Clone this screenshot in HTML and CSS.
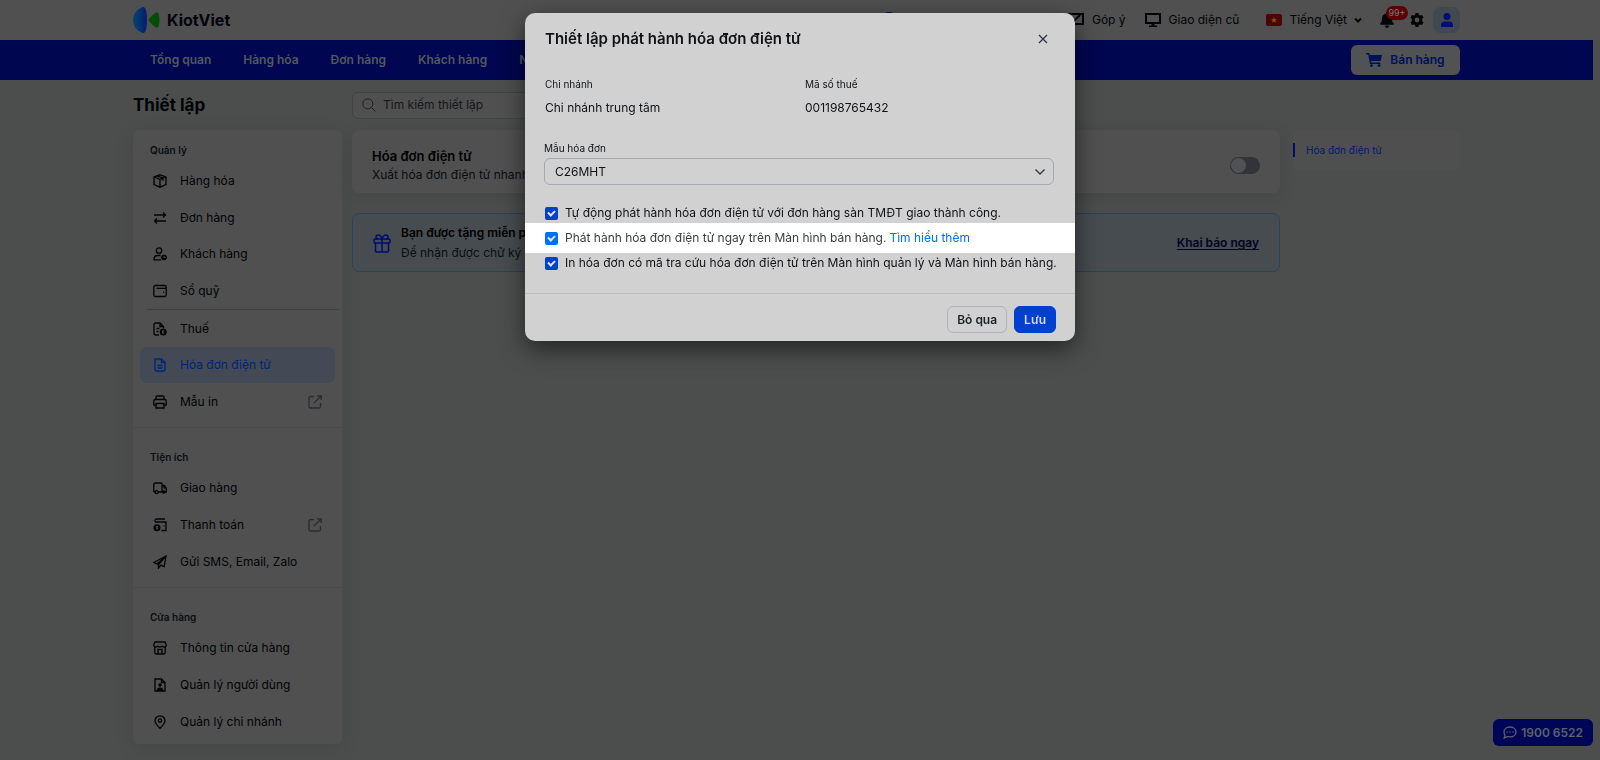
FILE: index.html
```html
<!DOCTYPE html>
<html lang="vi">
<head>
<meta charset="utf-8">
<meta name="viewport" content="width=device-width, initial-scale=1">
<title>KiotViet - Thiết lập</title>
<link rel="stylesheet" href="styles.css">
</head>
<body>
<header class="topbar">
  <a class="brand" href="#">
    <svg class="brand-mark" viewBox="0 0 27 26" aria-hidden="true">
      <defs><linearGradient id="wing" x1="0" y1="0" x2="1" y2="0"><stop offset="0" stop-color="#08466a"/><stop offset="1" stop-color="#001d72"/></linearGradient></defs>
      <path d="M10.500 0C13 .5 14 6 14 13s-1 12.500-3.500 13C4 24.500 0 19.500 0 13S4 1.500 10.500 0z" fill="url(#wing)"/>
      <path d="M15.500 13c1.500-2 5-6.500 8.500-8 2 1.500 2.500 4.500 2.500 8s-.5 6.500-2.500 8c-3.500-1.500-7-6-8.500-8z" fill="#004d05"/>
    </svg>
    <span>KiotViet</span>
  </a>
  <nav class="tools" aria-label="Tiện ích tài khoản">
    <a class="tool tool-round" href="#" aria-label="Hỗ trợ"><svg class="i16" viewBox="0 0 16 16" aria-hidden="true"><circle cx="8" cy="8" r="8" fill="#000a60"/></svg></a>
    <a class="tool" href="#"><svg class="i16" viewBox="0 0 16 16" aria-hidden="true"><path d="M1 2h14v10H7l-3 3v-3H1z" class="line"/><path d="m6 9 6-6" class="line"/></svg>Góp ý</a>
    <a class="tool tool-screen" href="#"><svg class="i16" viewBox="0 0 16 16" aria-hidden="true"><path d="M1 2h14v9H1z" class="line"/><path d="M6.500 11h3v2.500H12V15H4v-1.500h2.500z" fill="currentColor"/></svg>Giao diện cũ</a>
    <a class="tool tool-lang" href="#"><svg class="flag" viewBox="0 0 16 12" aria-hidden="true"><rect width="16" height="12" rx="2" fill="#4d0206"/><path d="m8 3 .8 2.200h2.300L9.300 6.600l.7 2.200L8 7.500 6 8.800l.7-2.200-1.800-1.400h2.300z" fill="#6d6500"/></svg>Tiếng Việt<svg class="caret" viewBox="0 0 8 8" aria-hidden="true"><path d="m1 2.500 3 3 3-3" class="line"/></svg></a>
    <button class="icon-btn bell" type="button" aria-label="Thông báo"><svg viewBox="0 0 14 16" aria-hidden="true"><path d="M7 0c.6 0 1 .5 1 1v.6c2.500.5 4 2.400 4 5 0 2.500.7 3.700 1.700 4.700.5.600.2 1.500-.7 1.500H1c-.9 0-1.200-.9-.7-1.500C1.300 10.300 2 9.100 2 6.600c0-2.600 1.500-4.500 4-5V1c0-.5.4-1 1-1zM5 13.600h4C9 15 8.100 16 7 16s-2-1-2-2.400z" fill="currentColor"/></svg><span class="badge">99+</span></button>
    <button class="icon-btn gear" type="button" aria-label="Thiết lập"><svg viewBox="0 0 14 14" aria-hidden="true"><path fill="currentColor" fill-rule="evenodd" d="M5.500 0h3l.4 1.900 1.200.7 1.900-.6L13.500 4.600 12.100 5.900v2.200l1.400 1.300L12 12l-1.900-.6-1.200.7L8.500 14h-3l-.4-1.900-1.200-.7L2 12 .5 9.400l1.400-1.300V5.900L.5 4.600 2 2l1.900.6 1.200-.7zM7 4.600a2.400 2.400 0 1 0 0 4.800 2.400 2.400 0 0 0 0-4.800z"/></svg></button>
    <button class="user" type="button" aria-label="Tài khoản"><svg viewBox="0 0 12 14" aria-hidden="true"><circle cx="6" cy="3.500" r="3.500" fill="currentColor"/><path d="M0 14v-2c0-2.200 1.600-3.600 3.700-3.600h4.600C10.400 8.400 12 9.800 12 12v2z" fill="currentColor"/></svg></button>
  </nav>
</header>
<nav class="mainnav" aria-label="Chính">
  <div class="mainnav-links">
    <a href="#">Tổng quan</a><a href="#">Hàng hóa</a><a href="#">Đơn hàng</a><a href="#">Khách hàng</a><a href="#">Nhân viên</a>
  </div>
  <button class="sell" type="button"><svg viewBox="0 0 16 14" aria-hidden="true"><path d="M0 0h2.600c.5 0 .8.300.9.700L3.700 2H16l-1.300 6H5l.3 1.500h9V11H4L2.200 1.500H0z" fill="currentColor"/><circle cx="5.500" cy="12.600" r="1.400" fill="currentColor"/><circle cx="13" cy="12.600" r="1.400" fill="currentColor"/></svg>Bán hàng</button>
</nav>

<main class="page">
  <div class="page-head">
    <h1>Thiết lập</h1>
    <label class="search"><svg viewBox="0 0 14 14" aria-hidden="true"><circle cx="5.800" cy="5.800" r="5" class="thin"/><path d="m9.500 9.500 4 4" class="thin"/></svg><input type="text" placeholder="Tìm kiếm thiết lập" aria-label="Tìm kiếm thiết lập"></label>
  </div>
  <div class="columns">
    <aside class="sidebar">
      <section>
        <h2>Quản lý</h2>
        <ul>
          <li><a href="#"><svg viewBox="0 0 14 14"><path d="M7 .8 13 3v7.500l-6 2.700-6-2.700V3zM1 3l6 2.400L13 3M7 5.400v7.800M4 1.900l6 2.300v2.600"/></svg>Hàng hóa</a></li>
          <li><a href="#"><svg viewBox="0 0 14 14"><path d="M1 4h11.500M10 1.500 12.500 4 10 6.500M13 10H1.500M4 7.500 1.500 10 4 12.500"/></svg>Đơn hàng</a></li>
          <li><a href="#"><svg viewBox="0 0 14 14"><circle cx="6" cy="3.500" r="2.700"/><path d="M7.500 8.500H4.500C2.300 8.500 1 10 1 12.800h7"/><circle cx="11" cy="10.500" r="2.800" class="solid"/><path d="M11 9v1.500h1.500" class="cut"/></svg>Khách hàng</a></li>
          <li><a href="#"><svg viewBox="0 0 14 14"><rect x=".8" y="1.500" width="12.400" height="11" rx="1.500"/><path d="M3.500 4.300h9.700M10 8.200h1"/></svg>Sổ quỹ</a></li>
          <li class="ruled"><a href="#"><svg viewBox="0 0 14 14"><path d="M6 13H2.500C1.500 13 1 12.500 1 11.500v-9C1 1.500 1.500 1 2.500 1H7l3.500 3.500V6M7 1v3.500h3.500M3.500 6.500h3M3.500 9.500h2"/><circle cx="10.200" cy="10" r="3.500" class="solid"/><path d="M11.300 8.800H9.500v2.400h1.800M9.500 10h1.500" class="cut"/></svg>Thuế</a></li>
          <li><a class="active" href="#" aria-current="page"><svg viewBox="0 0 14 14"><path d="M2.500 1h6L12 4.500v7.500c0 .6-.4 1-1 1H3c-.6 0-1-.4-1-1V1zM8.500 1v3.500H12M4.500 7.500h5M4.500 10h5"/></svg>Hóa đơn điện tử</a></li>
          <li><a href="#"><svg viewBox="0 0 14 14"><path d="M3 4.500V2c0-.7.400-1 1-1h6c.6 0 1 .3 1 1v2.500M3 10.500H1.800c-.6 0-1-.4-1-1V6c0-.9.600-1.500 1.500-1.500h9.400c.9 0 1.500.6 1.500 1.500v3.500c0 .6-.4 1-1 1H11M3 8.500h8V13H3z"/></svg>Mẫu in<svg class="ext" viewBox="0 0 14 14"><path d="M6 1.500H2.500c-.9 0-1.500.6-1.500 1.500v8.500c0 .9.600 1.500 1.500 1.500H11c.9 0 1.500-.6 1.500-1.500V8M9 .8h4.200V5M13 1 6 8"/></svg></a></li>
        </ul>
      </section>
      <section>
        <h2>Tiện ích</h2>
        <ul>
          <li><a href="#"><svg viewBox="0 0 14 14"><path d="M2 11.200c-.7 0-1.200-.5-1.200-1.200V3.500C.8 2.600 1.300 2 2.200 2H8c.7 0 1 .4 1 1v8H5.500M9 4.500h2.300l2 3V11H12"/><circle cx="3.700" cy="11.200" r="1.500"/><circle cx="10.700" cy="11" r="1.800" class="solid"/><path d="M10.500 5h1l1.800 2.500h-2.800z" class="solid"/></svg>Giao hàng</a></li>
          <li><a href="#"><svg viewBox="0 0 14 14"><path d="M2 4V2.500C2 1.500 2.500 1 3.500 1H12M2 4h11v8.500H8.500M10.500 8h1"/><circle cx="4" cy="9.800" r="3.500" class="solid"/><path d="M5 8.500H3.300v1.300h1.500V11H3" class="cut"/></svg>Thanh toán<svg class="ext" viewBox="0 0 14 14"><path d="M6 1.500H2.500c-.9 0-1.500.6-1.500 1.500v8.500c0 .9.600 1.500 1.500 1.500H11c.9 0 1.500-.6 1.500-1.500V8M9 .8h4.200V5M13 1 6 8"/></svg></a></li>
          <li><a href="#"><svg viewBox="0 0 14 14"><path d="M13 1 .8 7.500l3.400 1.600L13 1l-1.800 10.500-4-1.700M13 1 5.500 9.500V13l2-2.500"/></svg>Gửi SMS, Email, Zalo</a></li>
        </ul>
      </section>
      <section>
        <h2>Cửa hàng</h2>
        <ul>
          <li><a href="#"><svg viewBox="0 0 14 14"><path d="M2 1h10l1.300 3c0 1-.8 2-2.100 2S9.100 5.200 9.100 4.500C9.100 5.200 8.300 6 7 6s-2.100-.8-2.100-1.500C4.900 5.200 4.100 6 2.800 6S.7 5 .7 4zM1.800 6v5.500c0 1 .5 1.500 1.500 1.500h7.400c1 0 1.500-.5 1.500-1.500V6M5 13V8.500h4V13"/></svg>Thông tin cửa hàng</a></li>
          <li><a href="#"><svg viewBox="0 0 14 14"><path d="M2 1h6.500L12 4.500V13H2zM8.500 1v3.500H12"/><circle cx="7" cy="7" r="1.800" class="solid"/><path d="M3.500 13c0-2.500 1.500-3.500 3.500-3.500s3.500 1 3.500 3.500z" class="solid"/></svg>Quản lý người dùng</a></li>
          <li><a href="#"><svg viewBox="0 0 14 14"><path d="M7 13.300C4.500 11 2 8.500 2 5.800a5 5 0 0 1 10 0c0 2.700-2.500 5.200-5 7.500z"/><circle cx="7" cy="5.600" r="1.700"/></svg>Quản lý chi nhánh</a></li>
        </ul>
      </section>
    </aside>
    <div class="content">
      <section class="card">
        <div><h3>Hóa đơn điện tử</h3><p>Xuất hóa đơn điện tử nhanh chóng</p></div>
        <input class="toggle" type="checkbox" aria-label="Hóa đơn điện tử">
      </section>
      <section class="card promo">
        <svg viewBox="0 0 18 19" aria-hidden="true"><rect x="1" y="5" width="16" height="4" rx="1"/><path d="M2.500 9v8c0 .6.400 1 1 1h11c.6 0 1-.4 1-1V9M9 5v13M9 5C8 2 6.500 1 5.200 1 3.500 1 3 2.300 3 3c0 1.200 1 2 2 2M9 5c1-3 2.500-4 3.800-4C14.500 1 15 2.300 15 3c0 1.200-1 2-2 2"/></svg>
        <div><h3>Bạn được tặng miễn phí</h3><p>Để nhận được chữ ký số</p></div>
        <a href="#">Khai báo ngay</a>
      </section>
    </div>
    <nav class="toc" aria-label="Mục lục"><a href="#">Hóa đơn điện tử</a></nav>
  </div>
</main>

<a class="hotline" href="tel:19006522"><svg viewBox="0 0 14 13" aria-hidden="true"><path d="M7 1c3.500 0 6 2.100 6 4.900S10.500 10.800 7 10.800c-.8 0-1.600-.1-2.300-.3L1.200 12l.8-2.800C1.300 8.300 1 7.200 1 5.900 1 3.100 3.500 1 7 1z"/><path d="M4 6h.1M7 6h.1M10 6h.1" stroke-linecap="round"/></svg>1900 6522</a>

<div class="overlay">
  <form class="modal" role="dialog" aria-modal="true" aria-labelledby="modal-title">
    <header class="modal-head">
      <h2 id="modal-title">Thiết lập phát hành hóa đơn điện tử</h2>
      <button class="close" type="button" aria-label="Đóng"><svg viewBox="0 0 10 10" aria-hidden="true"><path d="m1 1 8 8M9 1 1 9"/></svg></button>
    </header>
    <dl class="facts">
      <div><dt>Chi nhánh</dt><dd>Chi nhánh trung tâm</dd></div>
      <div><dt>Mã số thuế</dt><dd>001198765432</dd></div>
    </dl>
    <div class="field">
      <label for="template">Mẫu hóa đơn</label>
      <div class="select"><select id="template"><option>C26MHT</option></select><svg viewBox="0 0 10 6" aria-hidden="true"><path d="m.5.500 4.500 4.500L9.500.5"/></svg></div>
    </div>
    <div class="checks">
      <label><input type="checkbox" checked><span>Tự động phát hành hóa đơn điện tử với đơn hàng sàn TMĐT giao thành công.</span></label>
      <div class="spot"><label><input type="checkbox" checked><span>Phát hành hóa đơn điện tử ngay trên Màn hình bán hàng.</span></label><a href="#">Tìm hiểu thêm</a></div>
      <label><input type="checkbox" checked><span>In hóa đơn có mã tra cứu hóa đơn điện tử trên Màn hình quản lý và Màn hình bán hàng.</span></label>
    </div>
    <footer class="modal-foot">
      <button class="btn" type="button">Bỏ qua</button>
      <button class="btn primary" type="submit">Lưu</button>
    </footer>
  </form>
</div>
</body>
</html>
```
FILE: styles.css
```css
:root {
  --bg: #4c4e4d;
  --surface: #505050;
  --navy: #00064f;
  --ink: #010306;
  --gutter: 133px;
}
* { box-sizing: border-box; margin: 0; padding: 0; }
body {
  min-height: 100vh;
  padding-right: 7px;
  overflow: hidden;
  background: var(--bg);
  color: var(--ink);
  font: 12px/18px Inter, "Liberation Sans", sans-serif;
}
button, input, select { font: inherit; color: inherit; }
button { border: 0; background: none; }
a { color: inherit; text-decoration: none; }
ul { list-style: none; }
svg { display: block; flex: none; }
.line { fill: none; stroke: currentColor; stroke-width: 2; }
.thin { fill: none; stroke: currentColor; stroke-width: 1; }

.topbar {
  display: flex;
  align-items: center;
  justify-content: space-between;
  height: 40px;
  margin-right: -7px;
  padding: 0 140px 0 var(--gutter);
  background: var(--surface);
}
.brand { display: flex; align-items: center; gap: 7px; color: #02040c; font-size: 16px; font-weight: 700; }
.brand-mark { width: 27px; height: 26px; }
.tools { display: flex; align-items: center; }
.tool { display: flex; align-items: center; gap: 8px; }
.tool-round { margin-right: 171px; }
.tool-screen { margin-left: 19px; }
.tool-lang { margin-left: 27px; gap: 7px; }
.i16 { width: 16px; height: 16px; }
.flag { width: 16px; height: 12px; }
.caret { width: 8px; height: 8px; }
.icon-btn { position: relative; width: 14px; color: #030507; }
.icon-btn svg { width: 100%; }
.bell { margin-left: 18px; }
.gear { margin-left: 16px; }
.badge {
  position: absolute;
  top: -6px;
  left: 6px;
  width: 22px;
  border-radius: 7px;
  background: #580306;
  color: #7e7777;
  font-size: 9px;
  line-height: 14px;
}
.user { display: grid; place-items: center; width: 27px; height: 26px; margin-left: 9px; border-radius: 8px; background: #414850; color: #001072; }
.user svg { width: 12px; height: 14px; }

.mainnav {
  display: flex;
  align-items: center;
  justify-content: space-between;
  height: 40px;
  padding: 0 var(--gutter);
  background: var(--navy);
  color: #53585c;
  font-weight: 600;
}
.mainnav-links { display: flex; padding-left: 1px; }
.mainnav-links a { padding: 0 16px; white-space: nowrap; }
.sell { display: flex; align-items: center; justify-content: center; gap: 8px; width: 109px; height: 30px; border-radius: 6px; background: #505254; color: #00105a; font-weight: 600; }
.sell svg { width: 16px; height: 14px; }

.page { padding: 10px var(--gutter) 16px; }
.page-head { display: flex; align-items: center; gap: 10px; height: 30px; margin-bottom: 10px; }
.page-head h1 { width: 209px; font-size: 17px; font-weight: 700; line-height: 24px; }
.search { display: flex; align-items: center; gap: 7px; width: 400px; height: 27px; padding: 0 9px; border: 1px solid #414444; border-radius: 6px; background: var(--surface); color: #1b1f27; }
.search svg { width: 14px; height: 14px; }
.search input { flex: 1; border: 0; outline: 0; background: none; }
.search input::placeholder { color: #14171b; opacity: 1; }

.columns { display: grid; grid-template-columns: 209px minmax(0, 1fr) 167px; align-items: start; }
.sidebar { border-radius: 6px; background: var(--surface); box-shadow: 0 4px 20px #00000018; }
.sidebar section { padding: 21px 0 7px; border-bottom: 1px solid #494949; }
.sidebar section:first-child { padding-top: 12px; }
.sidebar section:last-child { padding-bottom: 4px; border-bottom: 0; }
.sidebar h2 { margin: 0 17px 5px; color: #0a0d13; font-size: 10px; line-height: 16px; font-weight: 600; }
.sidebar ul { display: flex; flex-direction: column; min-height: 110px; }
.sidebar section:first-child ul { min-height: 257px; }
.sidebar li { display: flex; flex: 1; margin: 0 7px; }
.sidebar li a { display: flex; flex: 1; align-items: center; gap: 13px; padding: 0 13px; border-radius: 7px; }
.sidebar svg { width: 14px; height: 14px; fill: none; stroke: currentColor; stroke-width: 1.3; }
.sidebar .solid { fill: currentColor; stroke: none; }
.sidebar .cut { stroke: #505050; stroke-width: 1; }
.sidebar .ext { margin-left: auto; color: #292b2f; }
.sidebar .ruled { margin: 0 3px 0 14px; border-top: 1px solid #3e4042; }
.sidebar .ruled a { padding-left: 6px; }
.sidebar .active { background: #434a55; color: #00257b; }

.content { display: grid; gap: 20px; margin: 0 13px 0 10px; }
.card { display: flex; align-items: center; justify-content: space-between; padding: 17px 20px 9px; border-radius: 7px; background: var(--surface); box-shadow: 0 4px 18px #00000018; }
.card h3 { font-size: 13px; line-height: 19px; font-weight: 600; color: #000; }
.card p { color: #0a0c10; }
.toggle { position: relative; width: 30px; height: 17px; border-radius: 9px; background: #323439; appearance: none; }
.toggle::before { content: ""; position: absolute; top: 1px; left: 1px; width: 15px; height: 15px; border-radius: 50%; background: #505153; }
.promo { gap: 10px; padding: 9px 20px 8px; border: 1px solid #2d4259; background: #474c50; box-shadow: none; }
.promo div { margin-right: auto; }
.promo h3 { font-size: 12px; line-height: 20px; }
.promo p { line-height: 20px; }
.promo svg { width: 18px; height: 19px; fill: none; stroke: #000d70; stroke-width: 1.5; }
.promo a { color: #00051f; font-weight: 600; text-decoration: underline; text-underline-offset: 2px; }
.toc { padding: 13px 0; border-radius: 7px; background: #4f4f4f; }
.toc a { display: block; padding-left: 11px; border-left: 2px solid #000c70; color: #001c6b; font-size: 10px; line-height: 14px; }

.hotline { position: fixed; right: 7px; bottom: 14px; display: flex; align-items: center; gap: 4px; height: 27px; padding: 0 10px; border-radius: 6px; background: #000657; color: #5c6266; font-weight: 600; }
.hotline svg { width: 14px; height: 13px; fill: none; stroke: currentColor; stroke-width: 1.3; }

.overlay { position: fixed; inset: 0; display: flex; align-items: flex-start; justify-content: center; padding: 13px 20px; }
.modal { width: 550px; max-width: 100%; border-radius: 10px; background: #d1d1d1; color: #101216; box-shadow: 0 8px 24px #0000008c; }
.modal-head { display: flex; align-items: center; justify-content: space-between; padding: 14px 20px 12px; }
.modal-head h2 { font-size: 15px; line-height: 24px; font-weight: 600; }
.close { display: grid; place-items: center; width: 24px; height: 24px; }
.close svg { width: 10px; height: 10px; fill: none; stroke: #2c3440; stroke-width: 1.3; }
.facts { display: grid; grid-template-columns: 1fr 1fr; gap: 10px; padding: 13px 20px 14px; }
.facts dt { font-size: 10px; line-height: 16px; }
.facts dd { margin-top: 7px; line-height: 18px; }
.field { padding: 10px 21px 0 19px; }
.field label { display: block; margin-bottom: 3px; font-size: 10px; line-height: 14px; }
.select { position: relative; }
.select select { width: 100%; height: 27px; padding: 0 10px; border: 1px solid #a3a8b1; border-radius: 6px; background: transparent; appearance: none; }
.select svg { position: absolute; top: 11px; right: 9px; width: 10px; height: 6px; fill: none; stroke: #2c3440; stroke-width: 1.3; pointer-events: none; }
.checks { padding: 18px 0 20px; }
.checks label { display: flex; align-items: center; gap: 7px; padding: 0 10px 0 20px; line-height: 20px; }
.checks input { position: relative; width: 13px; height: 13px; flex: none; border-radius: 2px; background: #0040cd; appearance: none; }
.checks input::before { content: ""; position: absolute; top: 2px; left: 4px; width: 3px; height: 5px; border: solid #e1e6f0; border-width: 0 2px 2px 0; transform: rotate(45deg); }
.spot { display: flex; align-items: center; height: 30px; background: #fff; color: #3a3d42; }
.spot label { padding-right: 3px; }
.spot input { background: #0070f8; }
.spot a { color: #0070f4; }
.modal-foot { display: flex; justify-content: flex-end; gap: 7px; padding: 12px 19px 8px; border-top: 1px solid #bcbcbf; }
.btn { height: 27px; padding: 0 9px; border: 1px solid #b1b4ba; border-radius: 6px; color: #1a202a; font-weight: 600; }
.primary { border-color: #0040cd; background: #0040cd; color: #d5dbea; }
```
